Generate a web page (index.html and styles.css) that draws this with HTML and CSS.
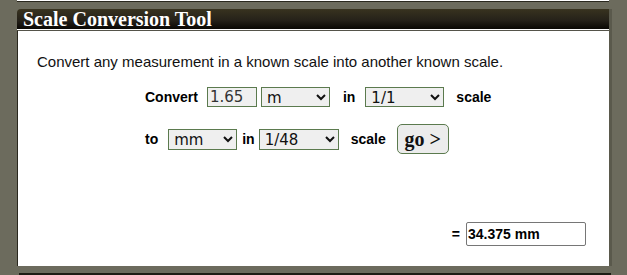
FILE: index.html
```html
<!DOCTYPE html>
<html>
<head>
<meta charset="utf-8">
<link rel="stylesheet" href="styles.css">
</head>
<body>
<div class="prev-end"></div>
<div class="panel">
  <div class="title-bar"><h2 class="title">Scale Conversion Tool</h2></div>
  <div class="content">
    <p class="intro">Convert any measurement in a known scale into another known scale.</p>
    <div class="row row-1">
      <span class="label">Convert</span>
      <input class="num" type="text" value="1.65">
      <select class="sel sel-unit"><option>m</option></select>
      <span class="label lab-in">in</span>
      <select class="sel sel-scale"><option>1/1</option></select>
      <span class="label lab-scale">scale</span>
    </div>
    <div class="row row-2">
      <span class="label lab-to">to</span>
      <select class="sel sel-unit"><option>mm</option></select>
      <span class="label lab-in2">in</span>
      <select class="sel sel-scale2"><option>1/48</option></select>
      <span class="label lab-scale2">scale</span>
      <button class="go">go &gt;</button>
    </div>
    <div class="result">
      <span class="label">=</span>
      <input class="out" type="text" value="34.375 mm">
    </div>
  </div>
</div>
<div class="next-start"></div>
</body>
</html>
```
FILE: styles.css
```css
html, body { margin: 0; padding: 0; }
body {
  background: #6c6b5d;
  width: 627px;
  height: 275px;
  overflow: hidden;
  font-family: "Liberation Sans", Arial, sans-serif;
}
.prev-end {
  margin-left: 17px;
  width: 592px;
  height: 1px;
  background: #ffffff;
  border-bottom: 1px solid #2a281e;
}
.panel {
  margin-top: 7px;
  margin-left: 17px;
  width: 592px;
  box-shadow: 3px 0 0 #5a594c;
}
.title-bar {
  height: 20px;
  background: linear-gradient(#38331f, #26221a 55%, #0a0804);
  border-top-left-radius: 4px;
  border-bottom: 1px solid #ffffff;
}
.title {
  margin: 0;
  padding-left: 6px;
  font-family: "Liberation Serif", Georgia, serif;
  font-weight: bold;
  font-size: 20px;
  line-height: 21px;
  color: #ffffff;
}
.content {
  background: #ffffff;
  border-top: 1px solid #55544a;
  border-left: 1px solid #2a281e;
  height: 235px;
}
.intro {
  margin: 0;
  padding: 22px 0 0 19px;
  font-size: 15px;
  line-height: 17px;
  color: #111111;
}
.row {
  display: flex;
  align-items: center;
  padding-left: 127px;
}
.row-1 { margin-top: 17px; height: 20px; }
.row-2 { margin-top: 17px; height: 30px; }
.label {
  font-weight: bold;
  font-size: 14px;
  color: #000000;
}
.num {
  margin-left: 9px;
  width: 50px;
  height: 20px;
  box-sizing: border-box;
  border: 1px solid #5b7a4e;
  background: #f0f0f0;
  font-family: "DejaVu Sans", Verdana, sans-serif;
  font-size: 15px;
  color: #333333;
  padding: 0 2px;
}
.sel {
  height: 20px;
  box-sizing: border-box;
  border: 1px solid #5b7a4e;
  border-radius: 0;
  background: #efefef;
  font-family: "DejaVu Sans", Verdana, sans-serif;
  font-size: 15px;
  color: #111111;
  padding: 0 1px;
}
.row-1 .sel-unit { margin-left: 4px; width: 69px; }
.lab-in { margin-left: 13px; }
.sel-scale { margin-left: 10px; width: 79px; }
.lab-scale { margin-left: 12px; }
.row-2 .sel-unit { margin-left: 10px; width: 69px; height: 21px; }
.lab-in2 { margin-left: 5px; }
.sel-scale2 { margin-left: 4px; width: 80px; height: 21px; }
.lab-scale2 { margin-left: 12px; }
.go {
  margin-left: 11px;
  width: 52px;
  height: 30px;
  border: 1px solid #5b7a4e;
  border-radius: 5px;
  background: #ececec;
  font-family: "Liberation Serif", Georgia, serif;
  font-weight: bold;
  font-size: 20px;
  color: #111111;
  padding: 0;
}
.result {
  display: flex;
  align-items: center;
  justify-content: flex-end;
  padding-right: 23px;
  margin-top: 68px;
}
.result .label { font-size: 14px; margin-right: 6px; }
.out {
  width: 120px;
  height: 24px;
  box-sizing: border-box;
  border: 1px solid #767676;
  border-radius: 2px;
  background: #ffffff;
  font-family: "Liberation Sans", Arial, sans-serif;
  font-weight: bold;
  font-size: 14px;
  color: #000000;
  padding: 0 1px;
}
.next-start {
  margin-top: 7px;
  margin-left: 19px;
  width: 592px;
  height: 3px;
  background: #1e1c14;
}
```
